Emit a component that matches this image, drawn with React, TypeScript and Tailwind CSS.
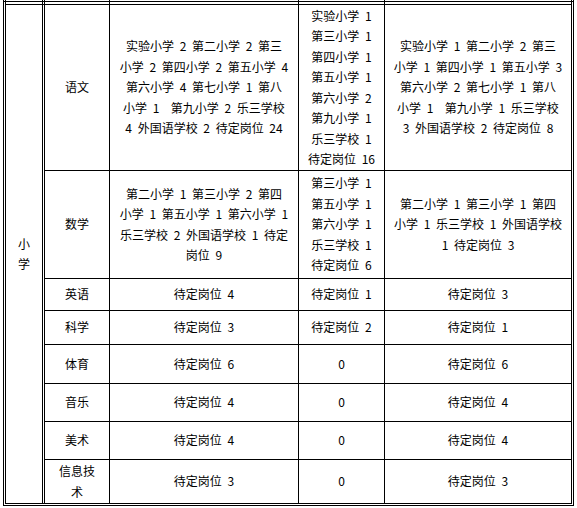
import React from 'react';

type Row = {
  subject: React.ReactNode;
  a: string[];
  b: string[];
  c: string[];
};

const rows: Row[] = [
  {
    subject: '语文',
    a: [
      '实验小学 2 第二小学 2 第三',
      '小学 2 第四小学 2 第五小学 4',
      '第六小学 4 第七小学 1 第八',
      '小学 1  第九小学 2 乐三学校',
      '4 外国语学校 2 待定岗位 24',
    ],
    b: ['实验小学 1', '第三小学 1', '第四小学 1', '第五小学 1', '第六小学 2', '第九小学 1', '乐三学校 1', '待定岗位 16'],
    c: [
      '实验小学 1 第二小学 2 第三',
      '小学 1 第四小学 1 第五小学 3',
      '第六小学 2 第七小学 1 第八',
      '小学 1  第九小学 1 乐三学校',
      '3 外国语学校 2 待定岗位 8',
    ],
  },
  {
    subject: '数学',
    a: ['第二小学 1 第三小学 2 第四', '小学 1 第五小学 1 第六小学 1', '乐三学校 2 外国语学校 1 待定', '岗位 9'],
    b: ['第三小学 1', '第五小学 1', '第六小学 1', '乐三学校 1', '待定岗位 6'],
    c: ['第二小学 1 第三小学 1 第四', '小学 1 乐三学校 1 外国语学校', '1 待定岗位 3'],
  },
  { subject: '英语', a: ['待定岗位 4'], b: ['待定岗位 1'], c: ['待定岗位 3'] },
  { subject: '科学', a: ['待定岗位 3'], b: ['待定岗位 2'], c: ['待定岗位 1'] },
  { subject: '体育', a: ['待定岗位 6'], b: ['0'], c: ['待定岗位 6'] },
  { subject: '音乐', a: ['待定岗位 4'], b: ['0'], c: ['待定岗位 4'] },
  { subject: '美术', a: ['待定岗位 4'], b: ['0'], c: ['待定岗位 4'] },
  {
    subject: (
      <>
        信息技
        <br />
        术
      </>
    ),
    a: ['待定岗位 3'],
    b: ['0'],
    c: ['待定岗位 3'],
  },
];

const cell = 'flex items-center justify-center bg-white text-center';

const Lines = ({ lines }: { lines: string[] }) => (
  <div className="whitespace-pre">
    {lines.map((l, i) => (
      <div key={i}>{l}</div>
    ))}
  </div>
);

// the bottom edge of the row above, cut off by the screenshot
const StubRow = ({ h }: { h: string }) => (
  <div className={`flex ${h}`}>
    <div className="w-[37px] border-l border-black" />
    <div className="w-[2px] border-l border-black" />
    <div className="w-[65px] border-l border-black" />
    <div className="w-[189px] border-l border-black" />
    <div className="w-[86px] border-l border-black" />
    <div className="w-[188px] border-x border-black" />
  </div>
);

export default function App() {
  return (
    <div className="min-h-screen bg-white text-black font-['Noto_Sans_CJK_SC',sans-serif] text-[12px] leading-[20.5px] [word-spacing:3px]">
      <div className="ml-[3px] w-[571px] border-x border-b border-black px-px pb-px">
        <StubRow h="h-px" />
        <div className="-mx-px h-px bg-black" />
        <StubRow h="h-[2px]" />

        <div className="flex border border-black">
          {/* 学段 */}
          <div className={`${cell} w-[37px] border-r border-black`}>
            <div>
              小
              <br />
              学
            </div>
          </div>
          <div className="w-px bg-white" />

          <div className="border-l border-black">
            <div className="grid grid-cols-[64px_188px_85px_186px] grid-rows-[165px_107px_31px_33px_38px_37px_37px_43px] gap-px bg-black">
              {rows.map((r, i) => (
                <React.Fragment key={i}>
                  <div className={cell}>
                    <div>{r.subject}</div>
                  </div>
                  <div className={cell}>
                    <Lines lines={r.a} />
                  </div>
                  <div className={cell}>
                    <Lines lines={r.b} />
                  </div>
                  <div className={cell}>
                    <Lines lines={r.c} />
                  </div>
                </React.Fragment>
              ))}
            </div>
          </div>
        </div>
      </div>
    </div>
  );
}
